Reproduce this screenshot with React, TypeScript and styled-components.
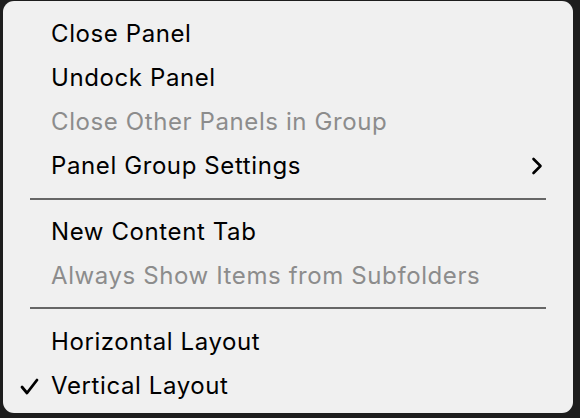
import styled, { createGlobalStyle } from "styled-components";

const GlobalStyle = createGlobalStyle`
  html, body {
    margin: 0;
    padding: 0;
    background: #1d1d1d;
  }
  body {
    font-family: Inter, "Noto Sans", sans-serif;
  }
`;

type Item =
  | { kind: "item"; label: string; disabled?: boolean; checked?: boolean; submenu?: boolean }
  | { kind: "separator" };

const menuItems: Item[] = [
  { kind: "item", label: "Close Panel" },
  { kind: "item", label: "Undock Panel" },
  { kind: "item", label: "Close Other Panels in Group", disabled: true },
  { kind: "item", label: "Panel Group Settings", submenu: true },
  { kind: "separator" },
  { kind: "item", label: "New Content Tab" },
  { kind: "item", label: "Always Show Items from Subfolders", disabled: true },
  { kind: "separator" },
  { kind: "item", label: "Horizontal Layout" },
  { kind: "item", label: "Vertical Layout", checked: true },
];

const CheckIcon = () => (
  <svg width="19" height="17" viewBox="0 0 19 17">
    <path d="M2 9 L7 15 L17 2" fill="none" stroke="#000" strokeWidth="2.8" strokeLinecap="round" strokeLinejoin="round" />
  </svg>
);

const ChevronIcon = () => (
  <svg width="12" height="18" viewBox="0 0 12 18">
    <path d="M2.5 2 L9.5 9 L2.5 16" fill="none" stroke="#000" strokeWidth="2.6" strokeLinecap="round" strokeLinejoin="round" />
  </svg>
);

export default function App() {
  return (
    <>
      <GlobalStyle />
      <Stage>
        <Menu>
          {menuItems.map((item, index) =>
            item.kind === "separator" ? (
              <Separator key={index} />
            ) : (
              <Row key={index} $disabled={item.disabled}>
                <CheckSlot>{item.checked && <CheckIcon />}</CheckSlot>
                <Label>{item.label}</Label>
                {item.submenu && (
                  <Chevron>
                    <ChevronIcon />
                  </Chevron>
                )}
              </Row>
            )
          )}
        </Menu>
      </Stage>
    </>
  );
}

const Stage = styled.div`
  width: 580px;
  height: 418px;
  padding: 1px 7px 5px 3px;
  box-sizing: border-box;
`;

const Menu = styled.div`
  height: 412px;
  box-sizing: border-box;
  background: #f0f0f0;
  border-radius: 11px;
  padding: 11px 0 6px;
  display: flex;
  flex-direction: column;
`;

const Row = styled.div<{ $disabled?: boolean }>`
  height: 44px;
  display: flex;
  align-items: center;
  padding: 0 30px 0 17px;
  font-size: 24px;
  color: ${(p) => (p.$disabled ? "#8c8c8c" : "#000")};
`;

const CheckSlot = styled.div`
  width: 31px;
  display: flex;
  align-items: center;
  margin-top: 2px;
`;

const Label = styled.span`
  flex: 1;
  letter-spacing: 0.6px;
`;

const Chevron = styled.span`
  display: flex;
  align-items: center;
`;

const Separator = styled.div`
  height: 2px;
  margin: 10px 27px 10px 27px;
  background: #666;
`;
